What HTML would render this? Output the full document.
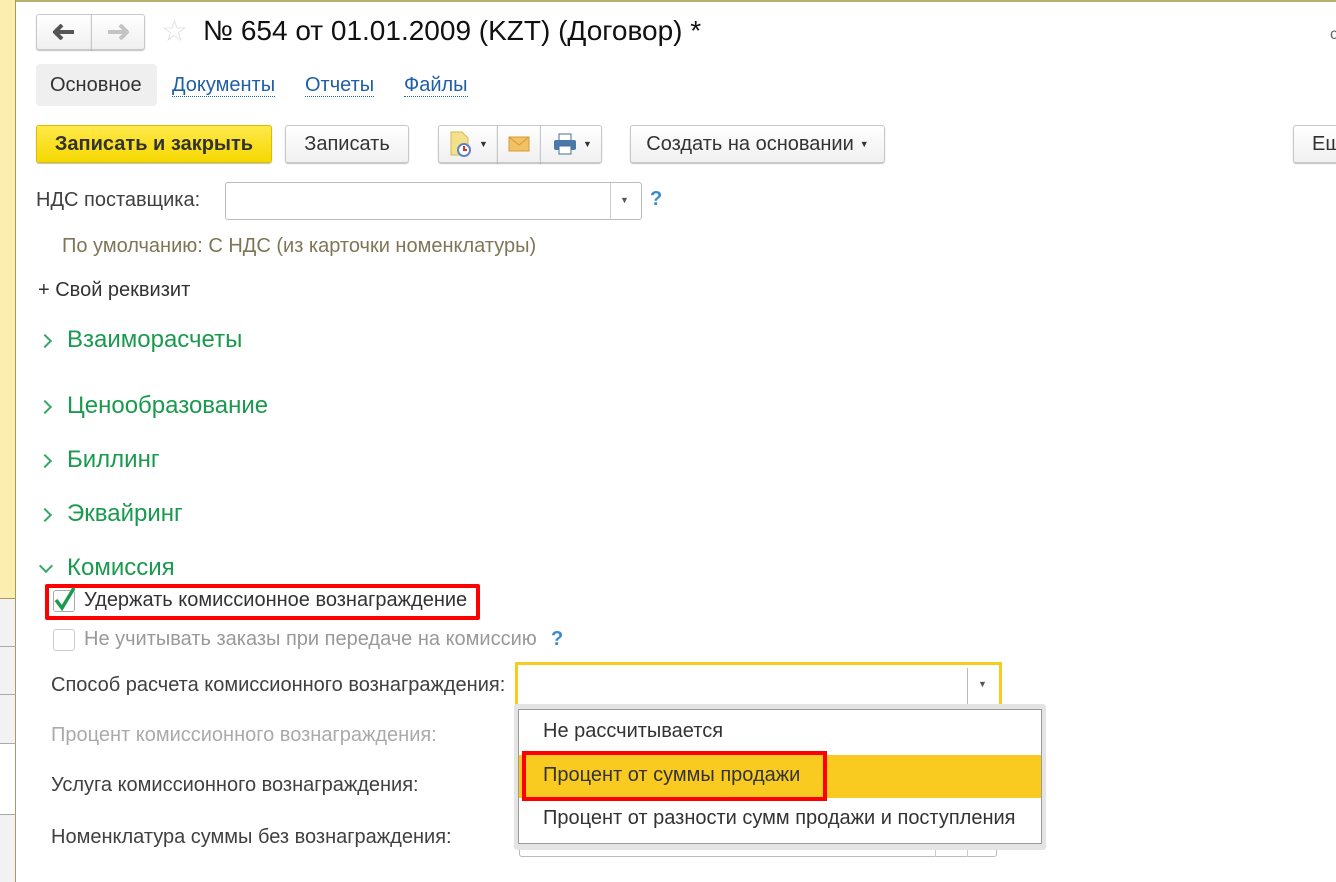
<!DOCTYPE html>
<html><head><meta charset="utf-8"><style>
*{box-sizing:border-box;margin:0;padding:0}
body{width:1336px;height:882px;overflow:hidden;background:#fff;font-family:"Liberation Sans",Arial,sans-serif;position:relative;color:#333}
.a{position:absolute;white-space:nowrap}
.btn{position:absolute;height:38px;border:1px solid #c8c8c8;border-radius:3px;background:linear-gradient(#fff,#f0f0f0);box-shadow:0 1px 1px rgba(0,0,0,.25);font-size:20px;color:#333;display:flex;align-items:center;justify-content:center}
.g{color:#1a9a4e;font-size:24px}
.lbl{font-size:20px;color:#404040}
.chev{position:absolute;width:10px;height:10px;border-right:2px solid #3aa86a;border-bottom:2px solid #3aa86a;transform:rotate(-45deg)}
.link{color:#1f5fa8;font-size:20px;border-bottom:1px dotted #1f5fa8;line-height:22px}
</style></head><body>
<div class="a" style="left:0;top:0;width:1336px;height:2px;background:#b8ae70"></div>
<div class="a" style="left:0;top:0;width:16px;height:598px;background:#fbeeae;border-right:1px solid #a39c62"></div>
<div class="a" style="left:0;top:598px;width:16px;height:284px;background:#f2f2f2;border-right:1px solid #a39c62;border-top:1px solid #a39c62"></div>
<div class="a" style="left:0;top:646px;width:16px;height:1px;background:#aaa"></div>
<div class="a" style="left:0;top:694px;width:16px;height:1px;background:#aaa"></div>
<div class="a" style="left:0;top:743px;width:16px;height:72px;background:#fff;border-top:1px solid #aaa;border-bottom:1px solid #aaa;border-right:1px solid #a39c62"></div>

<div class="btn" style="left:36px;top:14px;width:56px;height:36px;border-radius:3px 0 0 3px">
<svg width="22" height="16"><path d="M1 8h20M9 1L2 8l7 7" stroke="#555" stroke-width="4" fill="none"/></svg></div>
<div class="btn" style="left:91px;top:14px;width:54px;height:36px;border-radius:0 3px 3px 0">
<svg width="22" height="16"><path d="M1 8h20M13 1l7 7-7 7" stroke="#c4c4c4" stroke-width="4" fill="none"/></svg></div>
<div class="a" style="left:161px;top:14px;font-size:30px;color:#e0e0e0">☆</div>
<div class="a" style="left:203px;top:15px;font-size:28px;color:#111">№ 654 от 01.01.2009 (KZT) (Договор) *</div>
<div class="a" style="left:1330px;top:26px;font-size:16px;color:#666">c</div>

<div class="a" style="left:36px;top:64px;width:121px;height:42px;background:#efefef;border-radius:4px"></div>
<div class="a" style="left:50px;top:74px;font-size:20px;color:#333">Основное</div>
<div class="a link" style="left:172px;top:74px">Документы</div>
<div class="a link" style="left:305px;top:74px">Отчеты</div>
<div class="a link" style="left:404px;top:74px">Файлы</div>

<div class="btn" style="left:36px;top:125px;width:236px;background:linear-gradient(#ffe94a,#f5d800);border-color:#d8bd00;font-weight:bold;color:#333">Записать и закрыть</div>
<div class="btn" style="left:285px;top:125px;width:124px">Записать</div>
<div class="btn" style="left:438px;top:125px;width:60px;border-radius:3px 0 0 3px;justify-content:flex-start;padding-left:10px">
<svg width="24" height="26" viewBox="0 0 24 26"><path d="M2 1h11l6 6v17H2z" fill="#f3e08a" stroke="#d8b85a"/><circle cx="15" cy="19" r="6" fill="#fff" stroke="#5a86c0" stroke-width="2"/><path d="M15 15v4h3" stroke="#d33" stroke-width="2" fill="none"/></svg><span style="font-size:9px;margin-left:6px">▼</span></div>
<div class="btn" style="left:497px;top:125px;width:44px;border-radius:0">
<svg width="22" height="16"><rect x="1" y="1" width="20" height="14" fill="#f3c064" stroke="#d49a3a"/><path d="M1 1l10 8 10-8" stroke="#d49a3a" fill="none"/></svg></div>
<div class="btn" style="left:540px;top:125px;width:62px;border-radius:0 3px 3px 0;justify-content:flex-start;padding-left:12px">
<svg width="24" height="22"><rect x="6" y="1" width="12" height="7" fill="#fff" stroke="#4a6f95"/><rect x="1" y="7" width="22" height="10" rx="2" fill="#4a78a8"/><rect x="6" y="13" width="12" height="8" fill="#fff" stroke="#4a6f95"/></svg><span style="font-size:9px;margin-left:6px">▼</span></div>
<div class="btn" style="left:630px;top:125px;width:255px">Создать на основании <span style="font-size:9px;margin-left:6px">▼</span></div>
<div class="btn" style="left:1293px;top:125px;width:60px;justify-content:flex-start;padding-left:18px">Ещ</div>

<div class="a lbl" style="left:36px;top:189px">НДС поставщика:</div>
<div class="a" style="left:225px;top:182px;width:417px;height:38px;border:1px solid #bbb;border-radius:3px;background:#fff"></div>
<div class="a" style="left:610px;top:183px;width:1px;height:36px;background:#ccc"></div>
<div class="a" style="left:620px;top:195px;font-size:9px;color:#555">▼</div>
<div class="a" style="left:650px;top:188px;font-size:20px;color:#3a8ad0;font-weight:bold">?</div>
<div class="a" style="left:62px;top:235px;font-size:20px;color:#7e7656">По умолчанию: С НДС (из карточки номенклатуры)</div>
<div class="a" style="left:38px;top:279px;font-size:20px;color:#333">+ Свой реквизит</div>

<div class="chev" style="left:40px;top:336px"></div><div class="a g" style="left:67px;top:326px">Взаиморасчеты</div>
<div class="chev" style="left:40px;top:402px"></div><div class="a g" style="left:67px;top:392px">Ценообразование</div>
<div class="chev" style="left:40px;top:456px"></div><div class="a g" style="left:67px;top:446px">Биллинг</div>
<div class="chev" style="left:40px;top:510px"></div><div class="a g" style="left:67px;top:500px">Эквайринг</div>
<div class="chev" style="left:41px;top:561px;transform:rotate(45deg)"></div><div class="a g" style="left:67px;top:554px">Комиссия</div>

<div class="a" style="left:45px;top:584px;width:435px;height:36px;border:4px solid #f00;border-radius:2px"></div>
<div class="a" style="left:53px;top:590px;width:22px;height:22px;border:1px solid #aaa;border-radius:3px;background:#fff"></div>
<svg class="a" style="left:53px;top:586px" width="24" height="26"><path d="M3 14l6 8L21 2" stroke="#1a9a4e" stroke-width="3.5" fill="none"/></svg>
<div class="a" style="left:84px;top:589px;font-size:20px;color:#333">Удержать комиссионное вознаграждение</div>
<div class="a" style="left:53px;top:629px;width:22px;height:22px;border:1px solid #ccc;border-radius:3px"></div>
<div class="a" style="left:84px;top:628px;font-size:20px;color:#999">Не учитывать заказы при передаче на комиссию</div>
<div class="a" style="left:551px;top:628px;font-size:20px;color:#3a8ad0;font-weight:bold">?</div>

<div class="a lbl" style="left:51px;top:674px">Способ расчета комиссионного вознаграждения:</div>
<div class="a" style="left:515px;top:662px;width:487px;height:46px;border:3px solid #f6cd1d;background:#fff"></div>
<div class="a" style="left:967px;top:668px;width:1px;height:36px;background:#bbb"></div>
<div class="a" style="left:978px;top:679px;font-size:9px;color:#555">▼</div>
<div class="a lbl" style="left:51px;top:724px;color:#aaa">Процент комиссионного вознаграждения:</div>
<div class="a lbl" style="left:51px;top:774px">Услуга комиссионного вознаграждения:</div>
<div class="a lbl" style="left:51px;top:826px">Номенклатура суммы без вознаграждения:</div>
<div class="a" style="left:519px;top:830px;width:478px;height:27px;border:1px solid #bbb;border-radius:3px"></div>
<div class="a" style="left:935px;top:830px;width:1px;height:27px;background:#ccc"></div>
<div class="a" style="left:967px;top:830px;width:1px;height:27px;background:#ccc"></div>

<div class="a" style="left:514px;top:704px;width:532px;height:146px;background:#e4e4e4;border-radius:3px"></div>
<div class="a" style="left:518px;top:709px;width:524px;height:135px;background:#fff;border:1px solid #999"></div>
<div class="a" style="left:543px;top:720px;font-size:20px;color:#333">Не рассчитывается</div>
<div class="a" style="left:519px;top:755px;width:522px;height:43px;background:#f9cb20"></div>
<div class="a" style="left:522px;top:751px;width:305px;height:50px;border:4px solid #f00"></div>
<div class="a" style="left:543px;top:764px;font-size:20px;color:#333">Процент от суммы продажи</div>
<div class="a" style="left:543px;top:807px;font-size:20px;color:#333">Процент от разности сумм продажи и поступления</div>
</body></html>
